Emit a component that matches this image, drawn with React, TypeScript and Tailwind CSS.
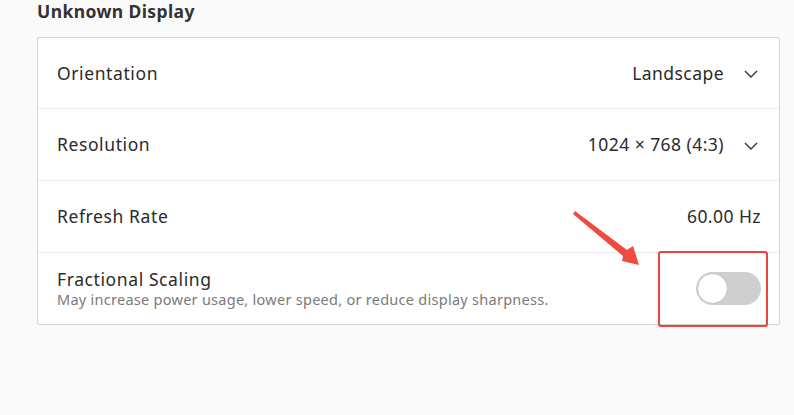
const rows = [
  { label: "Orientation", value: "Landscape", chevron: true },
  { label: "Resolution", value: "1024 × 768 (4:3)", chevron: true },
  { label: "Refresh Rate", value: "60.00 Hz", chevron: false },
];

const Chevron = () => (
  <svg width="14" height="8" viewBox="0 0 14 8" className="ml-[20px] mt-[2px]">
    <polyline points="1,1 7,7 13,1" fill="none" stroke="#333" strokeWidth="1.4" />
  </svg>
);

const App = () => {
  return (
    <div
      className="relative w-[794px] h-[415px] overflow-hidden bg-[#fafafa] text-[#2b2b2b]"
      style={{ fontFamily: '"Noto Sans", "Open Sans", sans-serif' }}
    >
      <div className="pl-[37px] pt-0">
        <div className="h-[37px] text-[17.5px] font-bold leading-[22px] tracking-[0.4px] text-[#333]">
          Unknown Display
        </div>
        <div className="w-[743px] bg-white border border-[#d4d4d4] rounded-[2px]">
          {rows.map((row, i) => (
            <div
              key={row.label}
              className={`flex items-center justify-between pl-[19px] ${
                row.chevron ? "pr-[21px]" : "pr-[18px]"
              } ${i > 0 ? "h-[72px] border-t border-[#ebebeb]" : "h-[70px]"}`}
            >
              <span className="text-[17.5px] tracking-[0.6px]">{row.label}</span>
              <div className="flex items-center">
                <span className="text-[17.5px] tracking-[0.45px]">{row.value}</span>
                {row.chevron && <Chevron />}
              </div>
            </div>
          ))}
          <div className="flex items-center justify-between h-[72px] pl-[19px] pr-[18px] border-t border-[#ebebeb]">
            <div className="flex flex-col">
              <span className="text-[17.5px] leading-[21px] tracking-[0.6px]">Fractional Scaling</span>
              <span className="text-[14.5px] leading-[19px] tracking-[0.27px] text-[#7a7a7a]">
                May increase power usage, lower speed, or reduce display sharpness.
              </span>
            </div>
            <div className="relative w-[65px] h-[33px] rounded-full bg-[#cfcfcf]">
              <div className="absolute left-[1px] top-[1px] w-[31px] h-[31px] rounded-full bg-white border border-[#c4c4c4]" />
            </div>
          </div>
        </div>
      </div>

      {/* red annotation overlay */}
      <div className="absolute left-[658px] top-[251px] w-[110px] h-[76px] border-2 border-[#e8453c] rounded-[3px]" />
      <svg
        className="absolute left-0 top-0"
        width={794}
        height={415}
        viewBox="0 0 794 415"
      >
        <polygon
          points="575,211 627,250 633,246 639,265 622,261 623,256 573,214"
          fill="#ef4b3f"
        />
      </svg>
    </div>
  );
};

export default App;
